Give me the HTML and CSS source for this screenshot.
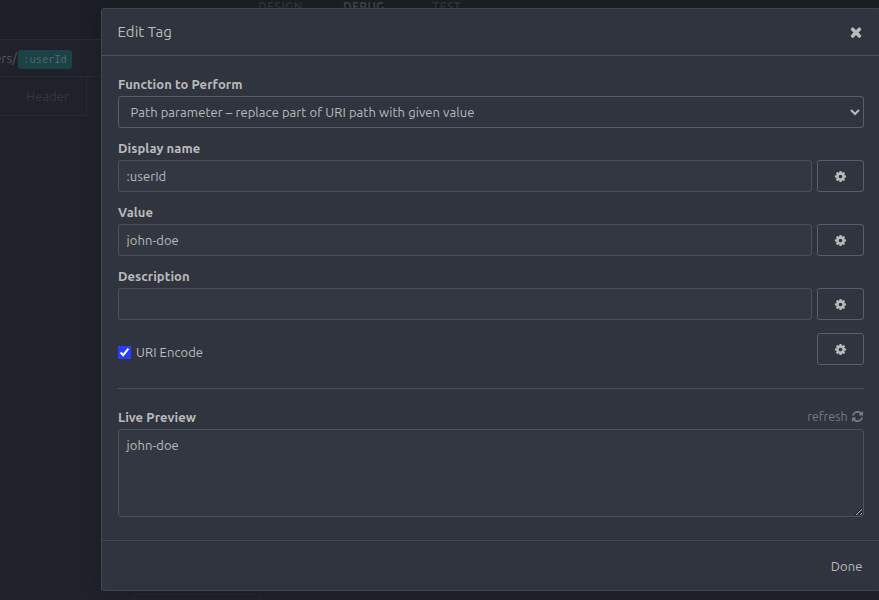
FILE: index.html
```html
<!DOCTYPE html>
<html lang="en">
<head>
<meta charset="utf-8">
<title>Edit Tag</title>
<link rel="stylesheet" href="styles.css">
</head>
<body>
<svg class="sprite" aria-hidden="true">
  <symbol id="cog" viewBox="0 0 1792 1792"><path d="M1152 896q0-106-75-181t-181-75-181 75-75 181 75 181 181 75 181-75 75-181zm512-109v222q0 12-8 23t-20 13l-185 28q-19 54-39 91 35 50 107 138 10 12 10 25t-9 23q-27 37-99 108t-94 71q-12 0-26-9l-138-108q-44 23-91 38-16 136-29 186-7 28-36 28h-222q-14 0-24.5-8.5t-11.5-21.5l-28-184q-49-16-90-37l-141 107q-10 9-25 9-14 0-25-11-126-114-165-168-7-10-7-23 0-12 8-23 15-21 51-66.5t54-70.5q-27-50-41-99l-183-27q-13-2-21-12.5t-8-23.5v-222q0-12 8-23t19-13l186-28q14-46 39-92-40-57-107-138-10-12-10-24 0-10 9-23 26-36 98.5-107.5t94.5-71.5q13 0 26 10l138 107q44-23 91-38 16-136 29-186 7-28 36-28h222q14 0 24.5 8.5t11.5 21.5l28 184q49 16 90 37l142-107q9-9 24-9 13 0 25 10 129 119 165 170 7 8 7 22 0 12-8 23-15 21-51 66.5t-54 70.5q26 50 41 98l183 28q13 2 21 12.5t8 23.5z"/></symbol>
  <symbol id="times" viewBox="0 0 1792 1792"><path d="M1490 1322q0 40-28 68l-136 136q-28 28-68 28t-68-28l-294-294-294 294q-28 28-68 28t-68-28l-136-136q-28-28-28-68t28-68l294-294-294-294q-28-28-28-68t28-68l136-136q28-28 68-28t68 28l294 294 294-294q28-28 68-28t68 28l136 136q28 28 28 68t-28 68l-294 294 294 294q28 28 28 68z"/></symbol>
  <symbol id="refresh" viewBox="0 0 1792 1792"><path d="M1639 1056q0 5-1 7-64 268-268 434.500t-478 166.500q-146 0-282.500-55t-243.500-157l-129 129q-19 19-45 19t-45-19-19-45v-448q0-26 19-45t45-19h448q26 0 45 19t19 45-19 45l-137 137q71 66 161 102t187 36q134 0 250-65t186-179q11-17 53-117 8-23 30-23h192q13 0 22.500 9.500t9.500 22.500zm25-800v448q0 26-19 45t-45 19h-448q-26 0-45-19t-19-45 19-45l138-138q-148-137-349-137-134 0-250 65t-186 179q-11 17-53 117-8 23-30 23h-199q-13 0-22.500-9.500t-9.500-22.500v-7q65-268 270-434.500t480-166.500q146 0 284 55.500t245 156.500l130-129q19-19 45-19t45 19 19 45z"/></symbol>
</svg>

<div class="app">
  <nav class="tabs"><span class="tab">DESIGN</span><span class="tab tab-active">DEBUG</span><span class="tab">TEST</span></nav>
  <div class="urlbar"><span class="path">ers/</span><span class="tag">:userId</span></div>
  <div class="panes"><span class="pane">Header</span></div>
  <div class="bottom-card"></div>
</div>

<div class="modal">
  <header class="modal-header">
    <h1 class="title">Edit Tag</h1>
    <button class="close" aria-label="Close"><svg class="icon-close"><use href="#times"/></svg></button>
  </header>
  <main class="modal-body">
    <div class="field">
      <label class="label">Function to Perform</label>
      <select class="control select"><option>Path parameter – replace part of URI path with given value</option></select>
    </div>
    <div class="field">
      <label class="label">Display name</label>
      <div class="row"><input class="control" type="text" value=":userId"><button class="gear" aria-label="Options"><svg class="icon"><use href="#cog"/></svg></button></div>
    </div>
    <div class="field">
      <label class="label">Value</label>
      <div class="row"><input class="control" type="text" value="john-doe"><button class="gear" aria-label="Options"><svg class="icon"><use href="#cog"/></svg></button></div>
    </div>
    <div class="field">
      <label class="label">Description</label>
      <div class="row"><input class="control" type="text" value=""><button class="gear" aria-label="Options"><svg class="icon"><use href="#cog"/></svg></button></div>
    </div>
    <div class="row check-row">
      <label class="check"><input class="box" type="checkbox" checked><span>URI Encode</span></label>
      <button class="gear" aria-label="Options"><svg class="icon"><use href="#cog"/></svg></button>
    </div>
    <hr class="rule">
    <div class="preview-head">
      <label class="label">Live Preview</label>
      <button class="refresh">refresh<svg class="icon-refresh"><use href="#refresh"/></svg></button>
    </div>
    <textarea class="control preview">john-doe</textarea>
  </main>
  <footer class="modal-footer"><button class="done">Done</button></footer>
</div>
</body>
</html>
```
FILE: styles.css
```css
* { box-sizing: border-box; }
body {
  margin: 0;
  height: 600px;
  overflow: hidden;
  background: #1f222a;
  color: #bbbbbb;
  font: 13px/20px Ubuntu, "Noto Sans", sans-serif;
  letter-spacing: 0.07px;
}
button, input, select, textarea { font: inherit; letter-spacing: inherit; color: inherit; }
button { padding: 0; border: 0; background: none; }
.sprite { display: none; }
svg { fill: currentColor; display: block; }

.app { height: 600px; display: flex; flex-direction: column; }
.tabs {
  height: 40px;
  padding-left: 235px;
  display: flex;
  background: #1d1f27;
  border-bottom: 1px solid #272a32;
  font-size: 12px;
  font-weight: 700;
  line-height: 14px;
  color: #30333b;
}
.tab { width: 83px; padding-left: 23px; letter-spacing: 0.2px; }
.tab-active { width: 90px; padding-left: 25px; color: #41434a; }
.tab:last-child { padding-left: 24px; }
.urlbar {
  height: 37px;
  display: flex;
  align-items: center;
  border-bottom: 1px solid #272a32;
  color: #55575d;
}
.path { width: 17px; margin-right: 1px; display: flex; justify-content: flex-end; white-space: nowrap; }
.tag {
  width: 54px;
  height: 19px;
  margin-top: 2px;
  border-radius: 3px;
  background: #1c4146;
  color: #46696c;
  font: 10.500px/18px "DejaVu Sans Mono", monospace;
  letter-spacing: -0.1px;
  text-align: center;
}
.panes { height: 39px; display: flex; }
.pane {
  width: 87px;
  padding: 9px 0 0 26px;
  border: solid #272a32;
  border-width: 0 1px 1px 0;
  color: #33363d;
}
.bottom-card {
  width: 128px;
  height: 6px;
  margin: auto 0 0 133px;
  border: 1px solid #252831;
  border-bottom: 0;
  border-radius: 3px 3px 0 0;
}

.modal {
  position: absolute;
  left: 101px;
  top: 8px;
  width: 780px;
  height: 583px;
  display: flex;
  flex-direction: column;
  border: 1px solid #414752;
  border-radius: 3px;
  background: #2f343f;
  box-shadow: 0 0 20px rgba(0, 0, 0, .2);
}
.modal-header {
  height: 47px;
  padding: 0 16px 0 15.500px;
  display: flex;
  align-items: center;
  justify-content: space-between;
  border-bottom: 1px solid #4b505a;
}
.title { margin: 0; font-size: 15px; font-weight: 400; letter-spacing: 0.05px; }
.icon-close { width: 16px; height: 16px; }
.modal-body { flex: 1; padding: 19px 16px 0; }
.field { margin-bottom: 12px; }
.label { display: block; height: 21px; line-height: 17px; font-weight: 700; }
.field .label { height: 20px; }
.field:first-child .label { height: 21px; line-height: 19px; }
.row { display: flex; gap: 5px; }
.control {
  display: block;
  flex: 1;
  min-width: 0;
  width: 100%;
  height: 32px;
  margin: 0;
  padding: 0 8px 0 7.500px;
  border: 1px solid #4b505a;
  border-radius: 3px;
  background: #323741;
  outline: 0;
}
.select { padding: 0 0 0 7.500px; background: #2f343f; border-color: #595e68; }
.gear {
  width: 47px;
  height: 32px;
  display: grid;
  place-items: center;
  border: 1px solid #595e68;
  border-radius: 3px;
}
.icon { width: 13px; height: 13px; }
.check-row { margin-top: 13px; justify-content: space-between; }
.check { height: 20px; margin-top: 9px; display: flex; align-items: center; gap: 5px; }
.box { width: 13px; height: 13px; margin: 1px 0 0; accent-color: #273cff; }
.rule { height: 1px; margin: 23px 0 20px; border: 0; background: #4b505a; }
.preview-head { height: 20px; display: flex; justify-content: space-between; }
.refresh { height: 15px; line-height: 15px; display: flex; align-items: center; gap: 3px; color: #777b82; font-size: 12.500px; letter-spacing: -0.05px; }
.icon-refresh { width: 13px; height: 13px; margin-right: 0.500px; }
.preview { height: 88px; padding: 5px 8px 5px 7.500px; resize: vertical; }
.modal-footer {
  height: 50px;
  padding: 0 17.500px;
  display: flex;
  align-items: center;
  justify-content: flex-end;
  border-top: 1px solid #414752;
}
```
